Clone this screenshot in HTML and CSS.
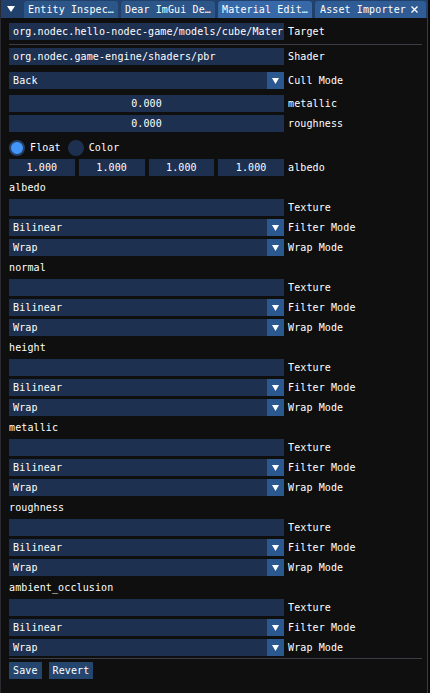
FILE: index.html
```html
<!DOCTYPE html>
<html>
<head>
<meta charset="utf-8">
<link rel="stylesheet" href="styles.css">
</head>
<body>
<div class="window">
  <div class="tabbar">
    <div class="menu-btn"><svg width="8" height="6" viewBox="0 0 8 6"><polygon points="0,0 8,0 4,6" fill="#fff"/></svg></div>
    <div class="tab">Entity Inspec…</div>
    <div class="tab">Dear ImGui De…</div>
    <div class="tab active">Material Edit…</div>
    <div class="tab wide">Asset Importer<span class="close"><svg width="7" height="7" viewBox="0 0 7 7"><path d="M0.5 0.5 L6.5 6.5 M6.5 0.5 L0.5 6.5" stroke="#fff" stroke-width="1.4" fill="none"/></svg></span></div>
  </div>
  <div class="content">
    <div class="row first"><div class="field">org.nodec.hello-nodec-game/models/cube/Mater</div><span class="lbl">Target</span></div>
    <div class="sep"></div>
    <div class="row after-sep"><div class="field">org.nodec.game-engine/shaders/pbr</div><span class="lbl">Shader</span></div>
    <div class="row loose"><div class="field combo"><span class="val">Back</span><span class="arrow"><svg width="7" height="6" viewBox="0 0 7 6"><polygon points="0,0 7,0 3.5,6" fill="#fff"/></svg></span></div><span class="lbl">Cull Mode</span></div>
    <div class="row mid"><div class="field center">0.000</div><span class="lbl">metallic</span></div>
    <div class="row"><div class="field center">0.000</div><span class="lbl">roughness</span></div>
    <div class="row radios">
      <span class="radio on"></span><span class="rlbl">Float</span>
      <span class="radio"></span><span class="rlbl">Color</span>
    </div>
    <div class="row"><div class="vec"><div class="field center">1.000</div><div class="field center">1.000</div><div class="field center">1.000</div><div class="field center">1.000</div></div><span class="lbl">albedo</span></div>

    <div class="slabel">albedo</div>
    <div class="row"><div class="field"></div><span class="lbl">Texture</span></div>
    <div class="row"><div class="field combo"><span class="val">Bilinear</span><span class="arrow"><svg width="7" height="6" viewBox="0 0 7 6"><polygon points="0,0 7,0 3.5,6" fill="#fff"/></svg></span></div><span class="lbl">Filter Mode</span></div>
    <div class="row"><div class="field combo"><span class="val">Wrap</span><span class="arrow"><svg width="7" height="6" viewBox="0 0 7 6"><polygon points="0,0 7,0 3.5,6" fill="#fff"/></svg></span></div><span class="lbl">Wrap Mode</span></div>

    <div class="slabel">normal</div>
    <div class="row"><div class="field"></div><span class="lbl">Texture</span></div>
    <div class="row"><div class="field combo"><span class="val">Bilinear</span><span class="arrow"><svg width="7" height="6" viewBox="0 0 7 6"><polygon points="0,0 7,0 3.5,6" fill="#fff"/></svg></span></div><span class="lbl">Filter Mode</span></div>
    <div class="row"><div class="field combo"><span class="val">Wrap</span><span class="arrow"><svg width="7" height="6" viewBox="0 0 7 6"><polygon points="0,0 7,0 3.5,6" fill="#fff"/></svg></span></div><span class="lbl">Wrap Mode</span></div>

    <div class="slabel">height</div>
    <div class="row"><div class="field"></div><span class="lbl">Texture</span></div>
    <div class="row"><div class="field combo"><span class="val">Bilinear</span><span class="arrow"><svg width="7" height="6" viewBox="0 0 7 6"><polygon points="0,0 7,0 3.5,6" fill="#fff"/></svg></span></div><span class="lbl">Filter Mode</span></div>
    <div class="row"><div class="field combo"><span class="val">Wrap</span><span class="arrow"><svg width="7" height="6" viewBox="0 0 7 6"><polygon points="0,0 7,0 3.5,6" fill="#fff"/></svg></span></div><span class="lbl">Wrap Mode</span></div>

    <div class="slabel">metallic</div>
    <div class="row"><div class="field"></div><span class="lbl">Texture</span></div>
    <div class="row"><div class="field combo"><span class="val">Bilinear</span><span class="arrow"><svg width="7" height="6" viewBox="0 0 7 6"><polygon points="0,0 7,0 3.5,6" fill="#fff"/></svg></span></div><span class="lbl">Filter Mode</span></div>
    <div class="row"><div class="field combo"><span class="val">Wrap</span><span class="arrow"><svg width="7" height="6" viewBox="0 0 7 6"><polygon points="0,0 7,0 3.5,6" fill="#fff"/></svg></span></div><span class="lbl">Wrap Mode</span></div>

    <div class="slabel">roughness</div>
    <div class="row"><div class="field"></div><span class="lbl">Texture</span></div>
    <div class="row"><div class="field combo"><span class="val">Bilinear</span><span class="arrow"><svg width="7" height="6" viewBox="0 0 7 6"><polygon points="0,0 7,0 3.5,6" fill="#fff"/></svg></span></div><span class="lbl">Filter Mode</span></div>
    <div class="row"><div class="field combo"><span class="val">Wrap</span><span class="arrow"><svg width="7" height="6" viewBox="0 0 7 6"><polygon points="0,0 7,0 3.5,6" fill="#fff"/></svg></span></div><span class="lbl">Wrap Mode</span></div>

    <div class="slabel">ambient_occlusion</div>
    <div class="row"><div class="field"></div><span class="lbl">Texture</span></div>
    <div class="row"><div class="field combo"><span class="val">Bilinear</span><span class="arrow"><svg width="7" height="6" viewBox="0 0 7 6"><polygon points="0,0 7,0 3.5,6" fill="#fff"/></svg></span></div><span class="lbl">Filter Mode</span></div>
    <div class="row"><div class="field combo"><span class="val">Wrap</span><span class="arrow"><svg width="7" height="6" viewBox="0 0 7 6"><polygon points="0,0 7,0 3.5,6" fill="#fff"/></svg></span></div><span class="lbl">Wrap Mode</span></div>

    <div class="sep bottom"></div>
    <div class="buttons"><span class="btn">Save</span><span class="btn">Revert</span></div>
  </div>
</div>
</body>
</html>
```
FILE: styles.css
```css
html, body {
  margin: 0;
  padding: 0;
}
body {
  width: 430px;
  height: 693px;
  overflow: hidden;
  background: #0a0a0a;
  font-family: "DejaVu Sans Mono", "Liberation Mono", monospace;
  font-size: 10px;
  letter-spacing: 0.12px;
  color: #ffffff;
}
.window {
  width: 428px;
  height: 693px;
  box-sizing: border-box;
  background: #0f0f0f;
  border-left: 1px solid #2a2a30;
  border-right: 1px solid #3b3b44;
  display: flex;
  flex-direction: column;
}
.tabbar {
  height: 18px;
  background: #21406b;
  display: flex;
  align-items: flex-end;
  gap: 3px;
  flex: none;
}
.menu-btn {
  width: 20px;
  height: 18px;
  display: flex;
  align-items: center;
  justify-content: center;
  flex: none;
}
.tab {
  width: 94px;
  height: 17px;
  box-sizing: border-box;
  padding: 0 4px;
  line-height: 17px;
  background: #2c5588;
  border-radius: 3px 3px 0 0;
  white-space: nowrap;
  overflow: hidden;
  flex: none;
}
.tab.active {
  background: #3768a8;
}
.tab.wide {
  width: 111px;
  padding-left: 5px;
  display: flex;
  align-items: center;
  background: #2f5c94;
}
.close {
  margin-left: auto;
  margin-right: 4px;
  display: flex;
}
.content {
  padding: 5px 8px 0 8px;
  display: flex;
  flex-direction: column;
}
.row {
  display: flex;
  align-items: center;
  height: 17px;
  margin-top: 3px;
  flex: none;
}
.row.first {
  margin-top: 0;
}
.row.after-sep {
  margin-top: 3px;
}
.row.loose {
  margin-top: 7px;
}
.row.mid {
  margin-top: 6px;
}
.row.radios {
  margin-top: 7px;
}
.field {
  width: 275px;
  height: 17px;
  line-height: 17px;
  box-sizing: border-box;
  padding: 0 4px;
  background: #1d3050;
  white-space: nowrap;
  overflow: hidden;
  flex: none;
}
.field.center {
  text-align: center;
}
.field.combo {
  display: flex;
  padding-right: 0;
}
.combo .val {
  flex: 1;
}
.combo .arrow {
  width: 17px;
  height: 17px;
  background: #2c5890;
  display: flex;
  align-items: center;
  justify-content: center;
  flex: none;
}
.vec {
  width: 275px;
  display: flex;
  gap: 4px;
  flex: none;
}
.vec .field {
  width: auto;
  flex: 1;
  padding: 0;
}
.lbl {
  margin-left: 4px;
  white-space: nowrap;
}
.sep {
  height: 1px;
  background: #3d3d46;
  margin-top: 4px;
  width: 413px;
  flex: none;
}
.sep.bottom {
  margin-top: 2px;
}
.slabel {
  height: 17px;
  line-height: 17px;
  margin-top: 3px;
  flex: none;
}
.radio {
  width: 16px;
  height: 16px;
  border-radius: 50%;
  background: #1d3050;
  box-sizing: border-box;
  flex: none;
}
.radio.on {
  background: #4296fa;
  border: 2px solid #26426a;
}
.rlbl {
  margin-left: 5px;
  margin-right: 7px;
}
.buttons {
  display: flex;
  gap: 7px;
  margin-top: 3px;
}
.btn {
  height: 17px;
  line-height: 17px;
  padding: 0 4px;
  background: #24456d;
}
```
